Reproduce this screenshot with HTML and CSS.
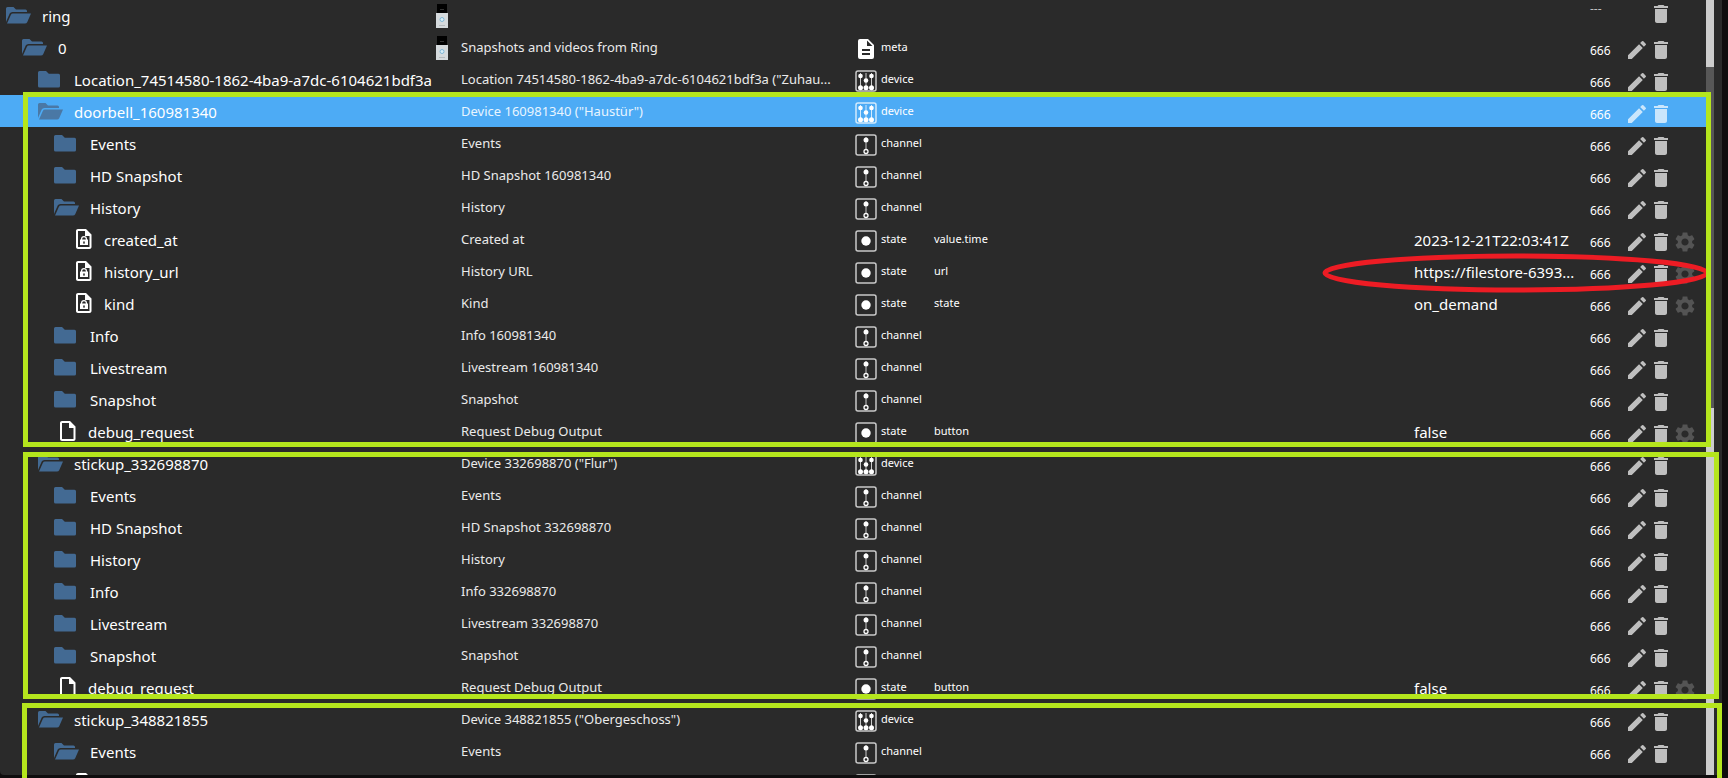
FILE: index.html
```html
<!DOCTYPE html>
<html lang="de">
<head>
<meta charset="utf-8">
<title>ring</title>
<link rel="stylesheet" href="styles.css">
</head>
<body>
<svg class="sprite" aria-hidden="true">
  <symbol id="open" viewBox="0 0 25 17"><path d="M0 15V1.500Q0 0 1.500 0H7.500L10 2.500H19.500Q21 2.500 21 4V5H6.500Q4.500 5 3.700 6.600Z"/><path d="M1 16.500L4.800 8Q5.400 6.600 7 6.600H25L21.200 15.300Q20.600 16.600 19 16.600Z"/></symbol>
  <symbol id="closed" viewBox="0 0 25 17"><path d="M1.500 0H8L10.800 2.700H20.500Q22 2.700 22 4.200V15Q22 16.500 20.500 16.500H1.500Q0 16.500 0 15V1.500Q0 0 1.500 0Z"/></symbol>
  <symbol id="file" viewBox="0 0 24 24"><path d="M14 2H6c-1.100 0-2 .9-2 2v16c0 1.100.9 2 2 2h11.500c1.100 0 2-.9 2-2V7.500zM6 20V4h7v5h4.500v11z"/></symbol>
  <symbol id="lock" viewBox="0 0 24 24"><path d="M14 2H6c-1.100 0-2 .9-2 2v16c0 1.100.9 2 2 2h11.500c1.100 0 2-.9 2-2V7.500zM6 20V4h7v5h4.500v11z"/><path d="M8 12.500h1V12a3 3 0 0 1 6 0v.5h1V18H8zM10.200 12.500h3.600V12a1.800 1.800 0 0 0-3.600 0zM12 14.200a1 1 0 0 0-.5 1.800v1h1v-1a1 1 0 0 0-.5-1.800z" fill-rule="evenodd"/></symbol>
  <symbol id="meta" viewBox="0 0 22 22"><path d="M13 1H5a2 2 0 0 0-2 2v16a2 2 0 0 0 2 2h12a2 2 0 0 0 2-2V7zM15 17H7v-2h8zm0-4H7v-2h8zM12 8V2.500L17.500 8z"/></symbol>
  <symbol id="device" viewBox="0 0 22 22"><rect class="frame" x="1" y="1" width="20" height="20" rx="2"/><path class="rail" d="M5.500 3v13M11 3v13M16.500 3v13"/><circle cx="5.500" cy="6" r="2.300"/><circle cx="11" cy="10.500" r="2.300"/><circle cx="16.500" cy="6" r="2.300"/><circle cx="5.500" cy="17.800" r="2.500"/><circle cx="11" cy="17.800" r="2.500"/><circle cx="16.500" cy="17.800" r="2.500"/></symbol>
  <symbol id="channel" viewBox="0 0 22 22"><rect class="frame" x="1" y="1" width="20" height="20" rx="2"/><path class="rail" d="M11 3v12"/><circle cx="11" cy="6" r="2.500"/><circle class="ring" cx="11" cy="17.500" r="2"/></symbol>
  <symbol id="state" viewBox="0 0 22 22"><rect class="frame" x="1" y="1" width="20" height="20" rx="2"/><circle cx="11" cy="11" r="4.700"/></symbol>
  <symbol id="bell" viewBox="0 0 12 24"><path fill="#000" d="M1 0h10v9H1z"/><path fill="#333" d="M4 5h4v1H4z"/><path fill="#d5dadd" d="M0 9h12v15H0z"/><circle cx="6" cy="15.500" r="2" fill="#d9eef8" stroke="#7fb7d6"/><path fill="#b5babd" d="M3 21h6v1H3z"/></symbol>
  <symbol id="edit" viewBox="0 0 24 24"><path d="M3 17.250V21h3.750L17.810 9.940l-3.750-3.750zM20.710 7.040a1 1 0 0 0 0-1.410l-2.340-2.340a1 1 0 0 0-1.410 0l-1.830 1.830 3.750 3.750z"/></symbol>
  <symbol id="delete" viewBox="0 0 24 24"><path d="M6 19c0 1.100.9 2 2 2h8c1.100 0 2-.9 2-2V7H6zM19 4h-3.500l-1-1h-5l-1 1H5v2h14z"/></symbol>
  <symbol id="gear" viewBox="0 0 24 24"><path d="M19.140 12.940c.04-.3.060-.61.060-.94 0-.32-.02-.64-.07-.94l2.030-1.580c.18-.14.230-.41.120-.61l-1.920-3.320c-.12-.22-.37-.29-.59-.22l-2.390.96c-.5-.38-1.030-.7-1.620-.94l-.36-2.540c-.04-.24-.24-.41-.48-.41h-3.840c-.24 0-.43.170-.47.410l-.36 2.540c-.59.240-1.130.570-1.620.940l-2.390-.96c-.22-.08-.47 0-.59.220L2.740 8.870c-.12.210-.08.470.12.610l2.030 1.580c-.05.300-.09.630-.09.940s.02.640.07.940l-2.030 1.580c-.18.140-.23.410-.12.610l1.920 3.320c.12.220.37.290.59.220l2.390-.96c.5.380 1.030.7 1.620.94l.36 2.540c.05.240.24.410.48.410h3.840c.24 0 .44-.17.470-.41l.36-2.540c.59-.24 1.130-.56 1.620-.94l2.390.96c.22.080.47 0 .59-.22l1.920-3.320c.12-.22.070-.47-.12-.61zM12 15.600c-1.980 0-3.600-1.620-3.600-3.600s1.620-3.600 3.600-3.600 3.600 1.620 3.600 3.600-1.620 3.600-3.600 3.600z"/></symbol>
</svg>
<main class="panel">
  <div class="list">
  <table class="tree">
    <colgroup><col class="c-id"><col class="c-pic"><col class="c-name"><col class="c-type"><col class="c-role"><col class="c-value"><col class="c-perm"><col class="c-act"></colgroup>
    <tbody>
    <tr class="root"><td class="id l0"><svg class="folder"><use href="#open"/></svg>ring</td><td><svg class="pic"><use href="#bell"/></svg></td><td class="name"></td><td class="type"></td><td class="role"></td><td class="value"></td><td class="perm">---</td><td class="act"><button class="second" aria-label="Delete"><svg><use href="#delete"/></svg></button></td></tr>
    <tr><td class="id l1"><svg class="folder"><use href="#open"/></svg>0</td><td><svg class="pic"><use href="#bell"/></svg></td><td class="name">Snapshots and videos from Ring</td><td class="type"><svg><use href="#meta"/></svg>meta</td><td class="role"></td><td class="value"></td><td class="perm">666</td><td class="act"><button aria-label="Edit"><svg><use href="#edit"/></svg></button><button aria-label="Delete"><svg><use href="#delete"/></svg></button></td></tr>
    <tr><td class="id l2"><svg class="folder"><use href="#closed"/></svg>Location_74514580-1862-4ba9-a7dc-6104621bdf3a</td><td></td><td class="name">Location 74514580-1862-4ba9-a7dc-6104621bdf3a ("Zuhau...</td><td class="type"><svg><use href="#device"/></svg>device</td><td class="role"></td><td class="value"></td><td class="perm">666</td><td class="act"><button aria-label="Edit"><svg><use href="#edit"/></svg></button><button aria-label="Delete"><svg><use href="#delete"/></svg></button></td></tr>
    <tr class="selected"><td class="id l2"><svg class="folder"><use href="#open"/></svg>doorbell_160981340</td><td></td><td class="name">Device 160981340 ("Haustür")</td><td class="type"><svg><use href="#device"/></svg>device</td><td class="role"></td><td class="value"></td><td class="perm">666</td><td class="act"><button aria-label="Edit"><svg><use href="#edit"/></svg></button><button aria-label="Delete"><svg><use href="#delete"/></svg></button></td></tr>
    <tr><td class="id l3"><svg class="folder"><use href="#closed"/></svg>Events</td><td></td><td class="name">Events</td><td class="type"><svg><use href="#channel"/></svg>channel</td><td class="role"></td><td class="value"></td><td class="perm">666</td><td class="act"><button aria-label="Edit"><svg><use href="#edit"/></svg></button><button aria-label="Delete"><svg><use href="#delete"/></svg></button></td></tr>
    <tr><td class="id l3"><svg class="folder"><use href="#closed"/></svg>HD Snapshot</td><td></td><td class="name">HD Snapshot 160981340</td><td class="type"><svg><use href="#channel"/></svg>channel</td><td class="role"></td><td class="value"></td><td class="perm">666</td><td class="act"><button aria-label="Edit"><svg><use href="#edit"/></svg></button><button aria-label="Delete"><svg><use href="#delete"/></svg></button></td></tr>
    <tr><td class="id l3"><svg class="folder"><use href="#open"/></svg>History</td><td></td><td class="name">History</td><td class="type"><svg><use href="#channel"/></svg>channel</td><td class="role"></td><td class="value"></td><td class="perm">666</td><td class="act"><button aria-label="Edit"><svg><use href="#edit"/></svg></button><button aria-label="Delete"><svg><use href="#delete"/></svg></button></td></tr>
    <tr><td class="id l4"><svg class="doc"><use href="#lock"/></svg>created_at</td><td></td><td class="name">Created at</td><td class="type"><svg><use href="#state"/></svg>state</td><td class="role">value.time</td><td class="value">2023-12-21T22:03:41Z</td><td class="perm">666</td><td class="act"><button aria-label="Edit"><svg><use href="#edit"/></svg></button><button aria-label="Delete"><svg><use href="#delete"/></svg></button><button class="config" aria-label="Settings"><svg><use href="#gear"/></svg></button></td></tr>
    <tr><td class="id l4"><svg class="doc"><use href="#lock"/></svg>history_url</td><td></td><td class="name">History URL</td><td class="type"><svg><use href="#state"/></svg>state</td><td class="role">url</td><td class="value">https://filestore-6393...</td><td class="perm">666</td><td class="act"><button aria-label="Edit"><svg><use href="#edit"/></svg></button><button aria-label="Delete"><svg><use href="#delete"/></svg></button><button class="config" aria-label="Settings"><svg><use href="#gear"/></svg></button></td></tr>
    <tr><td class="id l4"><svg class="doc"><use href="#lock"/></svg>kind</td><td></td><td class="name">Kind</td><td class="type"><svg><use href="#state"/></svg>state</td><td class="role">state</td><td class="value">on_demand</td><td class="perm">666</td><td class="act"><button aria-label="Edit"><svg><use href="#edit"/></svg></button><button aria-label="Delete"><svg><use href="#delete"/></svg></button><button class="config" aria-label="Settings"><svg><use href="#gear"/></svg></button></td></tr>
    <tr><td class="id l3"><svg class="folder"><use href="#closed"/></svg>Info</td><td></td><td class="name">Info 160981340</td><td class="type"><svg><use href="#channel"/></svg>channel</td><td class="role"></td><td class="value"></td><td class="perm">666</td><td class="act"><button aria-label="Edit"><svg><use href="#edit"/></svg></button><button aria-label="Delete"><svg><use href="#delete"/></svg></button></td></tr>
    <tr><td class="id l3"><svg class="folder"><use href="#closed"/></svg>Livestream</td><td></td><td class="name">Livestream 160981340</td><td class="type"><svg><use href="#channel"/></svg>channel</td><td class="role"></td><td class="value"></td><td class="perm">666</td><td class="act"><button aria-label="Edit"><svg><use href="#edit"/></svg></button><button aria-label="Delete"><svg><use href="#delete"/></svg></button></td></tr>
    <tr><td class="id l3"><svg class="folder"><use href="#closed"/></svg>Snapshot</td><td></td><td class="name">Snapshot</td><td class="type"><svg><use href="#channel"/></svg>channel</td><td class="role"></td><td class="value"></td><td class="perm">666</td><td class="act"><button aria-label="Edit"><svg><use href="#edit"/></svg></button><button aria-label="Delete"><svg><use href="#delete"/></svg></button></td></tr>
    <tr><td class="id l3"><svg class="doc"><use href="#file"/></svg>debug_request</td><td></td><td class="name">Request Debug Output</td><td class="type"><svg><use href="#state"/></svg>state</td><td class="role">button</td><td class="value">false</td><td class="perm">666</td><td class="act"><button aria-label="Edit"><svg><use href="#edit"/></svg></button><button aria-label="Delete"><svg><use href="#delete"/></svg></button><button class="config" aria-label="Settings"><svg><use href="#gear"/></svg></button></td></tr>
    <tr><td class="id l2"><svg class="folder"><use href="#open"/></svg>stickup_332698870</td><td></td><td class="name">Device 332698870 ("Flur")</td><td class="type"><svg><use href="#device"/></svg>device</td><td class="role"></td><td class="value"></td><td class="perm">666</td><td class="act"><button aria-label="Edit"><svg><use href="#edit"/></svg></button><button aria-label="Delete"><svg><use href="#delete"/></svg></button></td></tr>
    <tr><td class="id l3"><svg class="folder"><use href="#closed"/></svg>Events</td><td></td><td class="name">Events</td><td class="type"><svg><use href="#channel"/></svg>channel</td><td class="role"></td><td class="value"></td><td class="perm">666</td><td class="act"><button aria-label="Edit"><svg><use href="#edit"/></svg></button><button aria-label="Delete"><svg><use href="#delete"/></svg></button></td></tr>
    <tr><td class="id l3"><svg class="folder"><use href="#closed"/></svg>HD Snapshot</td><td></td><td class="name">HD Snapshot 332698870</td><td class="type"><svg><use href="#channel"/></svg>channel</td><td class="role"></td><td class="value"></td><td class="perm">666</td><td class="act"><button aria-label="Edit"><svg><use href="#edit"/></svg></button><button aria-label="Delete"><svg><use href="#delete"/></svg></button></td></tr>
    <tr><td class="id l3"><svg class="folder"><use href="#closed"/></svg>History</td><td></td><td class="name">History</td><td class="type"><svg><use href="#channel"/></svg>channel</td><td class="role"></td><td class="value"></td><td class="perm">666</td><td class="act"><button aria-label="Edit"><svg><use href="#edit"/></svg></button><button aria-label="Delete"><svg><use href="#delete"/></svg></button></td></tr>
    <tr><td class="id l3"><svg class="folder"><use href="#closed"/></svg>Info</td><td></td><td class="name">Info 332698870</td><td class="type"><svg><use href="#channel"/></svg>channel</td><td class="role"></td><td class="value"></td><td class="perm">666</td><td class="act"><button aria-label="Edit"><svg><use href="#edit"/></svg></button><button aria-label="Delete"><svg><use href="#delete"/></svg></button></td></tr>
    <tr><td class="id l3"><svg class="folder"><use href="#closed"/></svg>Livestream</td><td></td><td class="name">Livestream 332698870</td><td class="type"><svg><use href="#channel"/></svg>channel</td><td class="role"></td><td class="value"></td><td class="perm">666</td><td class="act"><button aria-label="Edit"><svg><use href="#edit"/></svg></button><button aria-label="Delete"><svg><use href="#delete"/></svg></button></td></tr>
    <tr><td class="id l3"><svg class="folder"><use href="#closed"/></svg>Snapshot</td><td></td><td class="name">Snapshot</td><td class="type"><svg><use href="#channel"/></svg>channel</td><td class="role"></td><td class="value"></td><td class="perm">666</td><td class="act"><button aria-label="Edit"><svg><use href="#edit"/></svg></button><button aria-label="Delete"><svg><use href="#delete"/></svg></button></td></tr>
    <tr><td class="id l3"><svg class="doc"><use href="#file"/></svg>debug_request</td><td></td><td class="name">Request Debug Output</td><td class="type"><svg><use href="#state"/></svg>state</td><td class="role">button</td><td class="value">false</td><td class="perm">666</td><td class="act"><button aria-label="Edit"><svg><use href="#edit"/></svg></button><button aria-label="Delete"><svg><use href="#delete"/></svg></button><button class="config" aria-label="Settings"><svg><use href="#gear"/></svg></button></td></tr>
    <tr><td class="id l2"><svg class="folder"><use href="#open"/></svg>stickup_348821855</td><td></td><td class="name">Device 348821855 ("Obergeschoss")</td><td class="type"><svg><use href="#device"/></svg>device</td><td class="role"></td><td class="value"></td><td class="perm">666</td><td class="act"><button aria-label="Edit"><svg><use href="#edit"/></svg></button><button aria-label="Delete"><svg><use href="#delete"/></svg></button></td></tr>
    <tr><td class="id l3"><svg class="folder"><use href="#open"/></svg>Events</td><td></td><td class="name">Events</td><td class="type"><svg><use href="#channel"/></svg>channel</td><td class="role"></td><td class="value"></td><td class="perm">666</td><td class="act"><button aria-label="Edit"><svg><use href="#edit"/></svg></button><button aria-label="Delete"><svg><use href="#delete"/></svg></button></td></tr>
    <tr><td class="id l4"><svg class="doc"><use href="#lock"/></svg></td><td></td><td class="name"></td><td class="type"><svg><use href="#state"/></svg></td><td class="role"></td><td class="value"></td><td class="perm"></td><td class="act"></td></tr>
    </tbody>
  </table>
  </div>
  <div class="scrollbar"><div class="thumb-a"></div><div class="gap"></div><div class="thumb-b"></div></div>
</main>
<svg class="mark-ellipse" viewBox="0 0 388 40" aria-hidden="true"><ellipse cx="194" cy="20" rx="191" ry="17"/></svg>
<div class="mark mark-a"></div>
<div class="mark mark-b"></div>
<div class="mark mark-c"></div>
</body>
</html>
```

FILE: styles.css
```css
* { box-sizing: border-box; }

body {
  position: relative;
  height: 100vh;
  margin: 0;
  overflow: hidden;
  background: #0f0d0e;
  color: #fff;
  font-family: "Noto Sans", "Open Sans", sans-serif;
}

.sprite { position: absolute; width: 0; height: 0; }

.panel {
  display: flex;
  height: calc(100vh - 3px);
  margin-right: 6px;
  padding-right: 8px;
  overflow: hidden;
  background: #2a2a2a;
  border-radius: 0 0 0 4px;
}

.list { flex: 1; min-width: 0; overflow: hidden; }

/* object tree */
.tree {
  width: 100%;
  margin-top: -1px;
  table-layout: fixed;
  border-collapse: collapse;
}

.c-id { width: 436px; }
.c-pic { width: 25px; }
.c-name { width: 393px; }
.c-type { width: 80px; }
.c-value { width: 176px; }
.c-perm { width: 35px; }
.c-act { width: 81px; }

td {
  height: 32px;
  padding: 0;
  line-height: 24px;
  vertical-align: top;
  white-space: nowrap;
}

td svg { fill: currentColor; }
.selected { background: #4dabf5; }

.id { padding-top: 5px; font-size: 15px; }
.l0 { padding-left: 6px; }
.l1 { padding-left: 22px; }
.l2 { padding-left: 38px; }
.l3 { padding-left: 54px; }
.l4 { padding-left: 70px; }

.folder {
  float: left;
  width: 25px;
  height: 17px;
  margin: 3px 11px 0 0;
  color: #436a93;
}
.selected .folder { color: #4a78a5; }

.doc {
  float: left;
  width: 24px;
  height: 24px;
  margin: -1px 8px 0 2px;
}

.pic { display: block; width: 12px; height: 24px; margin-top: 5px; }

.name {
  padding-top: 4px;
  color: #eaeaea;
  font-size: 13px;
}
.selected .name { color: #e8f5ff; }

.type, .role { padding-top: 4px; font-size: 11px; }
.type svg {
  float: left;
  width: 22px;
  height: 22px;
  margin: 3px 4px 0 1px;
}

.frame { fill: none; stroke: currentColor; stroke-width: 1.5; opacity: .75; }
.rail { fill: none; stroke: currentColor; stroke-width: 1; opacity: .75; }
.ring { fill: none; stroke: currentColor; stroke-width: 1.3; }

.value { padding-top: 5px; font-size: 15px; }
.perm { padding-top: 8px; font-size: 12px; }
.root .perm { padding-top: 0; line-height: 20px; color: #bfbfbf; }

.act { padding-top: 7px; line-height: 0; }
.root .act { padding-top: 3px; }
.act button {
  width: 24px;
  height: 24px;
  padding: 0;
  border: 0;
  background: none;
  color: rgba(255, 255, 255, .7);
}
.act .second { margin-left: 24px; }
.act .config { color: rgba(255, 255, 255, .2); }
.act svg { display: block; width: 24px; height: 24px; }

.scrollbar { display: flex; flex-direction: column; width: 8px; }
.thumb-a { height: 67px; background: #cdcdcd; }
.gap { height: 341px; background: #575757; }
.thumb-b { flex: 1; background: #cdcdcd; }

/* highlights over the list */
.mark { position: absolute; border: 5px solid #b5e61d; }
.mark-a { top: 92px; left: 23px; right: 17px; height: 355px; }
.mark-b { top: 452px; left: 23px; right: 9px; height: 247px; }
.mark-c { top: 703px; left: 22px; right: 6px; bottom: 0; border-bottom: 0; }

.mark-ellipse {
  position: absolute;
  top: 253px;
  right: 18px;
  width: 388px;
  height: 40px;
  fill: none;
  stroke: #ed1c24;
  stroke-width: 5;
}
```
